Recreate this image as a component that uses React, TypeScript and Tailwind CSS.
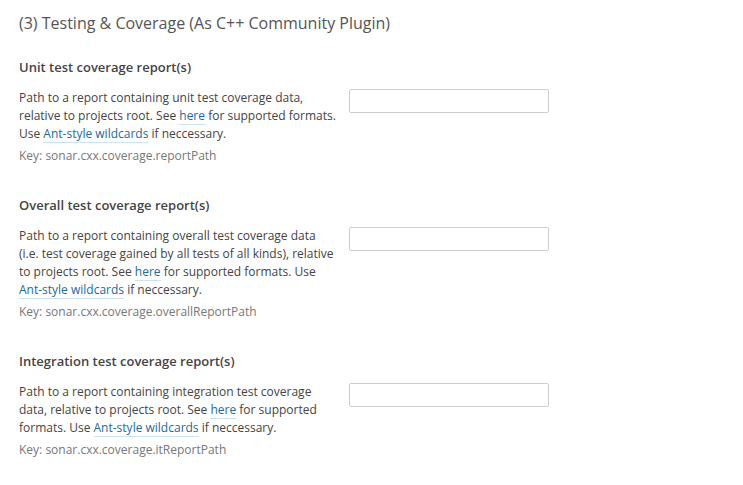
import type { ReactNode } from "react";

function DocLink({ children }: { children: string }) {
  return <a href="#" className="border-b border-[#cae3f2] text-[#236a97]">{children}</a>;
}

const here = <DocLink>here</DocLink>;
const ant = <DocLink>Ant-style wildcards</DocLink>;

const sections: { title: string; lines: ReactNode[]; key: string }[] = [
  {
    title: "Unit test coverage report(s)",
    lines: [
      "Path to a report containing unit test coverage data,",
      <>relative to projects root. See {here} for supported formats.</>,
      <>Use {ant} if neccessary.</>,
    ],
    key: "sonar.cxx.coverage.reportPath",
  },
  {
    title: "Overall test coverage report(s)",
    lines: [
      "Path to a report containing overall test coverage data",
      "(i.e. test coverage gained by all tests of all kinds), relative",
      <>to projects root. See {here} for supported formats. Use</>,
      <>{ant} if neccessary.</>,
    ],
    key: "sonar.cxx.coverage.overallReportPath",
  },
  {
    title: "Integration test coverage report(s)",
    lines: [
      "Path to a report containing integration test coverage",
      <>data, relative to projects root. See {here} for supported</>,
      <>formats. Use {ant} if neccessary.</>,
    ],
    key: "sonar.cxx.coverage.itReportPath",
  },
];

export default function App() {
  return (
    <div className="min-h-screen bg-white px-[19px] pt-[11px] font-['Open_Sans',sans-serif] text-[#444]">
      <h2 className="text-[16px] leading-[24px] text-[#555]">(3) Testing &amp; Coverage (As C++ Community Plugin)</h2>
      <div className="mt-[22px] flex flex-col gap-[30px]">
        {sections.map((s) => (
          <div key={s.key}>
            <h3 className="text-[13px] font-semibold leading-[20px]">{s.title}</h3>
            <div className="mt-[12px] flex gap-[20px]">
              <div className="w-[310px]">
                <p className="text-[12px] leading-[18px]">
                  {s.lines.map((l, i) => (
                    <span key={i} className="block whitespace-nowrap">{l}</span>
                  ))}
                </p>
                <p className="mt-[4px] text-[12px] leading-[18px] text-[#777]">Key: {s.key}</p>
              </div>
              <input className="h-[24px] w-[200px] rounded-[2px] border border-[#cdcdcd] bg-white" />
            </div>
          </div>
        ))}
      </div>
    </div>
  );
}
